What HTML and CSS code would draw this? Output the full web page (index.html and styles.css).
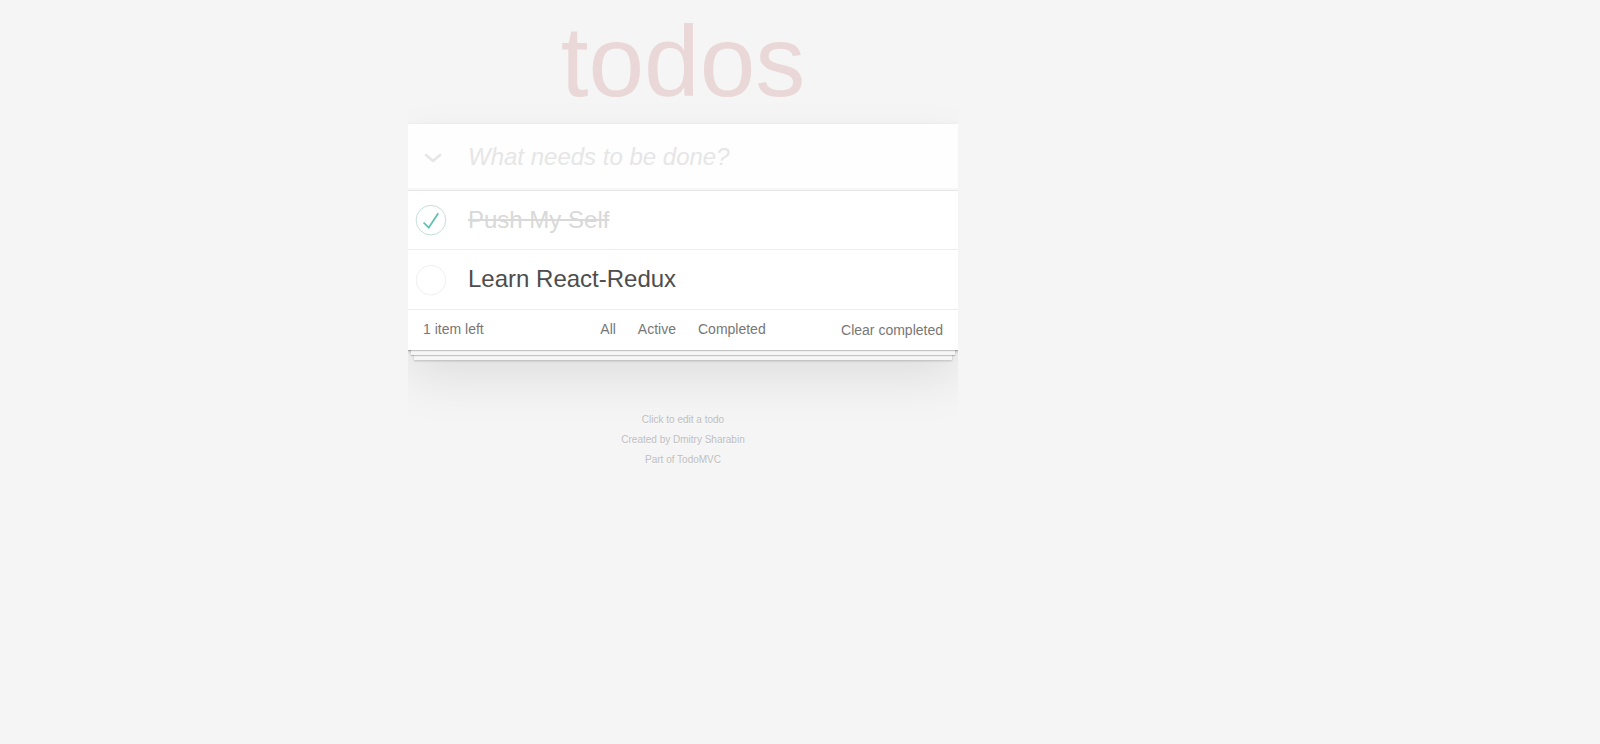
FILE: index.html
```html
<!DOCTYPE html>
<html lang="en">
<head>
<meta charset="utf-8">
<title>Redux TodoMVC</title>
<link rel="stylesheet" href="styles.css">
</head>
<body>
<h1 class="title">todos</h1>
<section class="todoapp">
  <header class="header">
    <span class="toggle-all">
      <svg width="18" height="10" viewBox="0 0 18 10"><polyline points="2,2 9,8 16,2" fill="none" stroke="#e6e6e6" stroke-width="2.6" stroke-linecap="round" stroke-linejoin="round"/></svg>
    </span>
    <input class="new-todo" type="text" placeholder="What needs to be done?">
  </header>
  <section class="main">
    <ul class="todo-list">
      <li class="todo completed">
        <span class="toggle">
          <svg width="40" height="40" viewBox="-10 -18 100 135"><circle cx="50" cy="50" r="50" fill="none" stroke="#bddad5" stroke-width="3"/><path fill="#5dc2af" d="M72 25L42 71 27 56l-4 4 20 20 34-52z"/></svg>
        </span>
        <label class="todo-label">Push My Self</label>
      </li>
      <li class="todo">
        <span class="toggle">
          <svg width="40" height="40" viewBox="-10 -18 100 135"><circle cx="50" cy="50" r="50" fill="none" stroke="#ededed" stroke-width="3"/></svg>
        </span>
        <label class="todo-label">Learn React-Redux</label>
      </li>
    </ul>
  </section>
  <footer class="footer">
    <span class="todo-count"><strong>1</strong> item left</span>
    <ul class="filters">
      <li><a href="#/">All</a></li>
      <li><a href="#/active">Active</a></li>
      <li><a href="#/completed">Completed</a></li>
    </ul>
    <button class="clear-completed">Clear completed</button>
  </footer>
</section>
<footer class="info">
  <p>Click to edit a todo</p>
  <p>Created by <a href="#">Dmitry Sharabin</a></p>
  <p>Part of <a href="#">TodoMVC</a></p>
</footer>
</body>
</html>
```

FILE: styles.css
```css
html, body {
  margin: 0;
  padding: 0;
}

body {
  font: 14px "Liberation Sans", Arial, Helvetica, sans-serif;
  line-height: 1.4em;
  background: #f5f5f5;
  color: #4d4d4d;
  max-width: 550px;
  margin-left: 408px;
  -webkit-font-smoothing: antialiased;
}

.title {
  margin: 11px 0 13px;
  height: 100px;
  font-size: 100px;
  line-height: 100px;
  font-weight: 100;
  text-align: center;
  color: rgba(175, 47, 47, 0.15);
}

.todoapp {
  background: #fff;
  margin: 0 0 40px 0;
  position: relative;
  box-shadow: 0 2px 4px 0 rgba(0, 0, 0, 0.2), 0 25px 50px 0 rgba(0, 0, 0, 0.1);
}

.header {
  display: flex;
  align-items: center;
  box-shadow: inset 0 -2px 1px rgba(0, 0, 0, 0.03);
  background: rgba(0, 0, 0, 0.003);
}

.toggle-all {
  width: 60px;
  flex: none;
  display: flex;
  padding-left: 16px;
  box-sizing: border-box;
  padding-top: 3px;
}

.toggle-all svg {
  display: block;
}

.new-todo {
  flex: 1;
  min-width: 0;
  margin: 0;
  border: none;
  outline: none;
  background: transparent;
  font-family: inherit;
  font-size: 24px;
  line-height: 1.4em;
  color: inherit;
  padding: 16px 16px 16px 0;
  box-sizing: content-box;
  height: 33.6px;
}

.new-todo::placeholder {
  font-style: italic;
  font-weight: 300;
  color: #e6e6e6;
}

.main {
  border-top: 1px solid #e6e6e6;
}

.todo-list {
  margin: 0;
  padding: 0;
  list-style: none;
}

.todo {
  display: flex;
  align-items: center;
  font-size: 24px;
  border-bottom: 1px solid #ededed;
}

.toggle {
  width: 40px;
  height: 40px;
  flex: none;
}

.toggle svg {
  display: block;
}

.todo-label {
  padding: 15px 15px 15px 20px;
  line-height: 1.2;
  display: block;
  word-break: break-all;
  color: #4d4d4d;
}

.todo.completed .todo-label {
  color: #d9d9d9;
  text-decoration: line-through;
}

.footer {
  color: #777;
  padding: 10px 15px;
  height: 20px;
  display: grid;
  grid-template-columns: 1fr auto 1fr;
  align-items: center;
  position: relative;
}

.footer::before {
  content: "";
  position: absolute;
  right: 0;
  bottom: 0;
  left: 0;
  height: 50px;
  overflow: hidden;
  box-shadow: 0 1px 1px rgba(0, 0, 0, 0.2),
    0 8px 0 -3px #f6f6f6,
    0 9px 1px -3px rgba(0, 0, 0, 0.2),
    0 16px 0 -6px #f6f6f6,
    0 17px 2px -6px rgba(0, 0, 0, 0.2);
}

.todo-count {
  text-align: left;
  line-height: 20px;
  position: relative;
  top: -1px;
}

.todo-count strong {
  font-weight: 300;
}

.filters {
  display: flex;
  margin: 0;
  padding: 0;
  list-style: none;
  position: relative;
  top: -1px;
}

.filters a {
  color: inherit;
  margin: 0 3px;
  padding: 0 7px;
  text-decoration: none;
  border: 1px solid transparent;
  border-radius: 3px;
  display: block;
  line-height: 18px;
}

.clear-completed {
  justify-self: end;
  margin: 0;
  padding: 0;
  border: 0;
  background: none;
  font: inherit;
  font-size: 14px;
  color: inherit;
  line-height: 20px;
  cursor: pointer;
}

.info {
  margin: 65px auto 0;
  color: #bfbfbf;
  font-size: 10px;
  text-shadow: 0 1px 0 rgba(255, 255, 255, 0.5);
  text-align: center;
}

.info p {
  line-height: 1;
  margin: 10px 0;
}

.info a {
  color: inherit;
  text-decoration: none;
  font-weight: 400;
}
```
